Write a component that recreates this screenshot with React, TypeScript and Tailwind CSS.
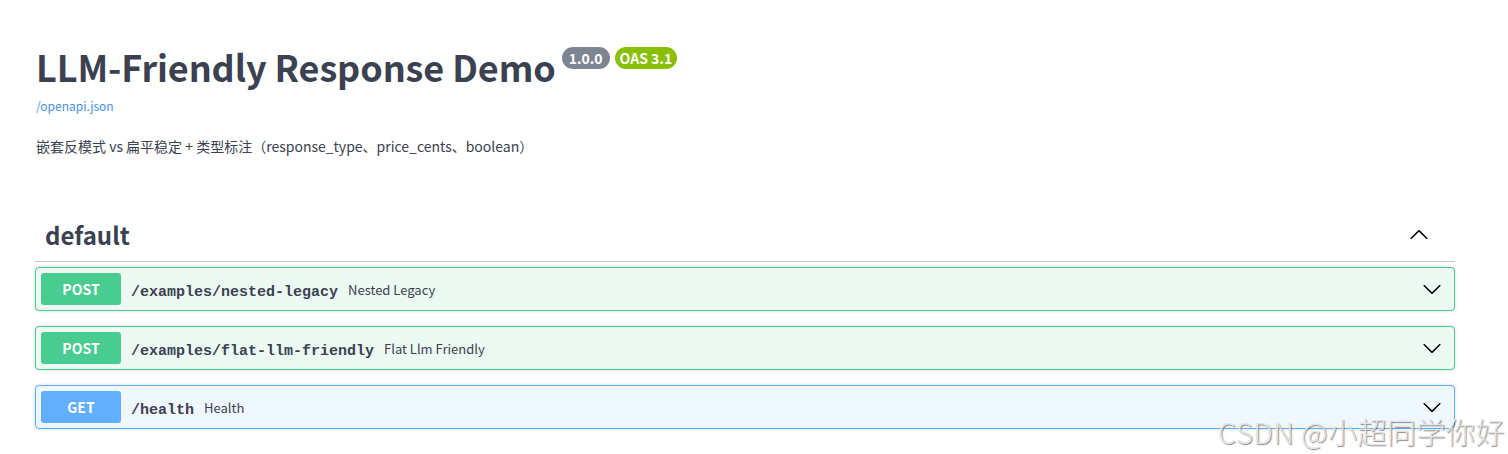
import React from "react";

type Op = { method: "POST" | "GET"; path: string; summary: string };

const ops: Op[] = [
  { method: "POST", path: "/examples/nested-legacy", summary: "Nested Legacy" },
  { method: "POST", path: "/examples/flat-llm-friendly", summary: "Flat Llm Friendly" },
  { method: "GET", path: "/health", summary: "Health" },
];

const SANS = "font-['Noto_Sans_CJK_SC','Noto_Sans',sans-serif]";

function ArrowDown() {
  return (
    <svg width="20" height="20" viewBox="0 0 20 20" aria-hidden="true">
      <path
        fill="#000"
        d="M17.418 6.109c.272-.268.709-.268.979 0s.271.701 0 .969l-7.908 7.83c-.27.268-.707.268-.979 0l-7.908-7.83c-.27-.268-.27-.701 0-.969.271-.268.709-.268.979 0L10 13.25l7.418-7.141z"
      />
    </svg>
  );
}

function ArrowUp() {
  return (
    <svg width="20" height="20" viewBox="0 0 20 20" aria-hidden="true">
      <path
        fill="#000"
        d="M2.582 13.891c-.272.268-.709.268-.979 0s-.271-.701 0-.969l7.908-7.83c.27-.268.707-.268.979 0l7.908 7.83c.27.268.27.701 0 .969-.271.268-.709.268-.978 0L10 6.75l-7.418 7.141z"
      />
    </svg>
  );
}

function OpBlock({ op }: { op: Op }) {
  const isGet = op.method === "GET";
  return (
    <div
      className={`mb-[15px] flex items-center rounded-[4px] border p-[5px] shadow-[0_0_3px_rgba(0,0,0,0.19)] ${
        isGet ? "border-[#61affe] bg-[#eff7ff]" : "border-[#49cc90] bg-[#edfaf4]"
      }`}
    >
      <span
        className={`flex h-[32px] w-[80px] shrink-0 items-center justify-center rounded-[3px] text-[14px] font-bold text-white ${
          isGet ? "bg-[#61affe]" : "bg-[#49cc90]"
        }`}
      >
        {op.method}
      </span>
      <span className="ml-[10px] pt-[8px] font-['Liberation_Mono',monospace] text-[15px] font-bold leading-[20px] text-[#3b4151]">
        {op.path}
      </span>
      <span className="ml-[10px] pt-[2px] text-[13px] leading-[20px] text-[#3b4151]">{op.summary}</span>
      <span className="ml-auto mr-[7px] flex items-center">
        <ArrowDown />
      </span>
    </div>
  );
}

export default function App() {
  return (
    <div className={`relative min-h-[454px] bg-white ${SANS} text-[#3b4151]`}>
      <div className="ml-[35px] w-[1420px] pt-[43px]">
        <div className="flex items-start">
          <h2 className="ml-[1px] text-[36px] font-bold leading-[46px] tracking-[-0.1px] text-[#3b4151]">
            LLM-Friendly Response Demo
          </h2>
          <span className="ml-[6px] mt-[4px] rounded-[57px] bg-[#7d8492] px-[7px] text-[14px] font-bold leading-[22px] text-white">
            1.0.0
          </span>
          <span className="ml-[5px] mt-[4px] rounded-[57px] bg-[#89bf04] px-[5px] text-[14px] font-bold leading-[22px] text-white">
            OAS 3.1
          </span>
        </div>
        <a className="ml-[1px] mt-[9px] block text-[12px] leading-[16px] text-[#4990e2]">/openapi.json</a>
        <p className="ml-[1px] mt-[22px] text-[14px] leading-[20px] text-[#3b4151]">
          嵌套反模式 vs 扁平稳定 + 类型标注（response_type、price_cents、boolean）
        </p>

        <div className="mt-[63px] flex items-center border-b border-[#c4c6cb] pb-[10px] pl-[10px] pr-[26px]">
          <h3 className="text-[24px] font-bold leading-[32px] text-[#3b4151]">default</h3>
          <span className="ml-auto flex items-center">
            <ArrowUp />
          </span>
        </div>
        <div className="mt-[5px]">
          {ops.map((op) => (
            <OpBlock key={op.path} op={op} />
          ))}
        </div>
      </div>
      <div className="pointer-events-none absolute bottom-[4px] right-[3px] font-['Noto_Sans_CJK_SC',sans-serif] text-[29px] font-light leading-[38px] tracking-[0.5px] text-[#e4e4e4] [text-shadow:1px_1px_1px_rgba(0,0,0,0.45)]">
        CSDN @小超同学你好
      </div>
    </div>
  );
}
